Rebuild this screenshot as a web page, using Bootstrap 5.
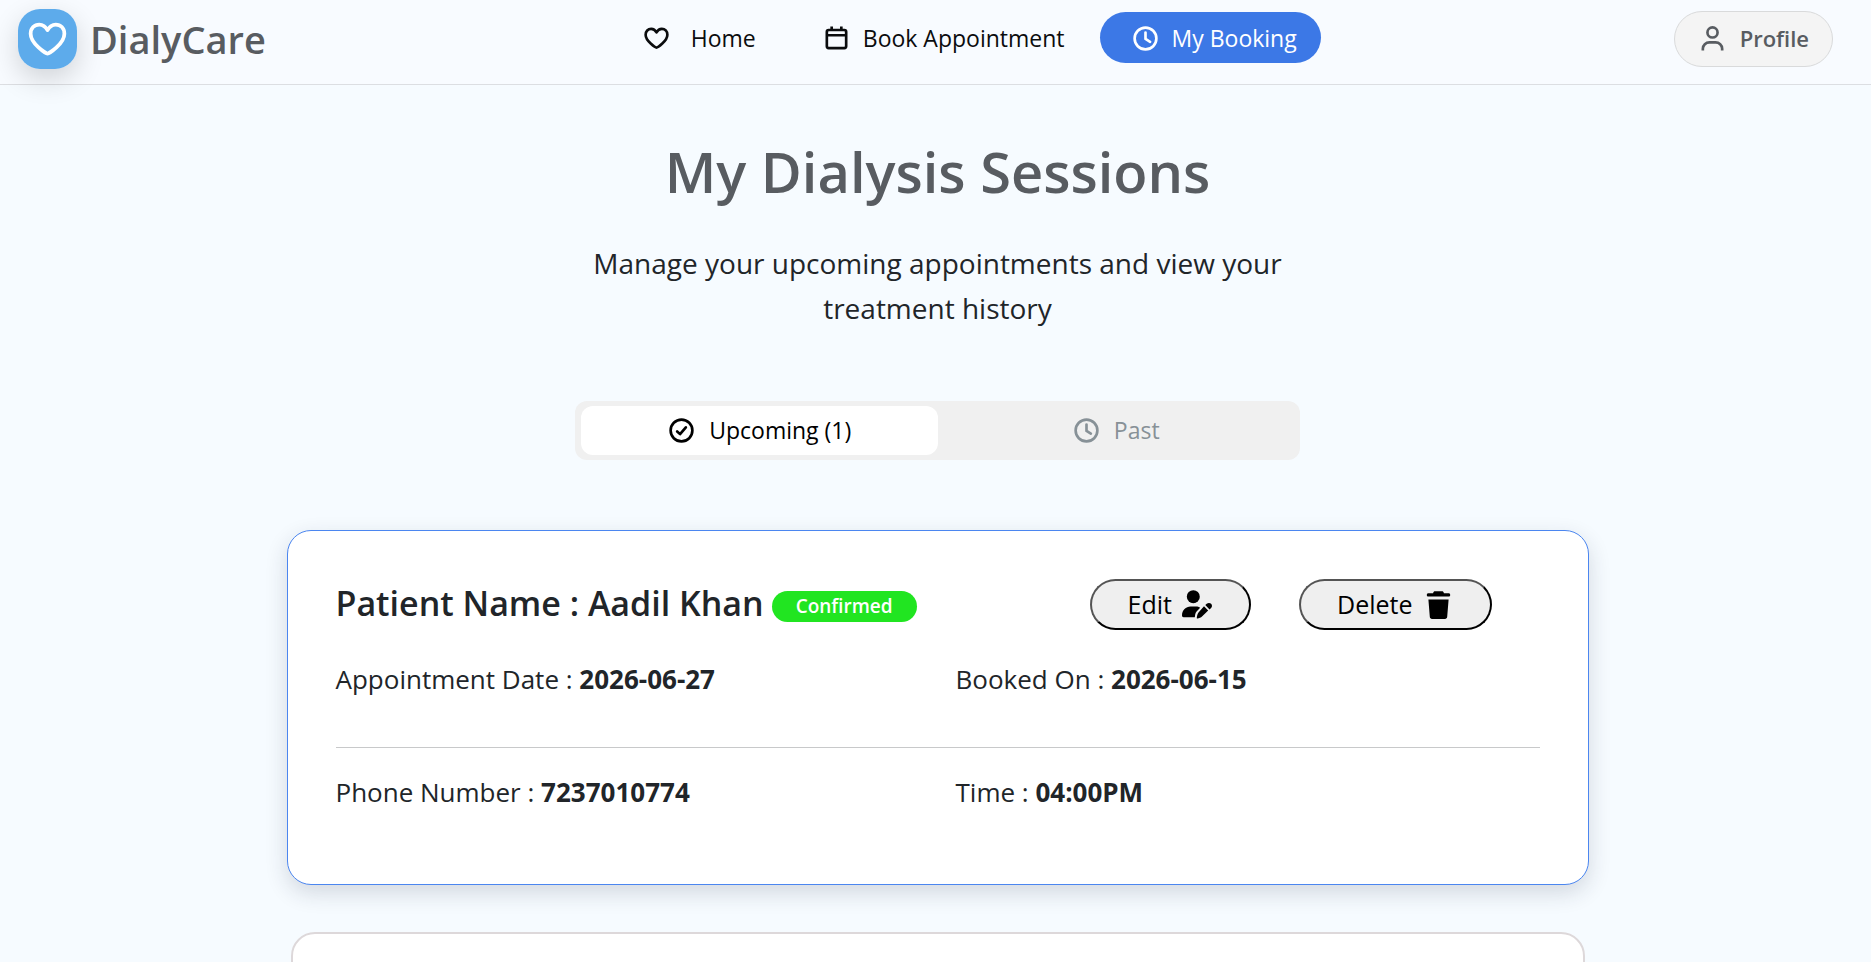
<!DOCTYPE html>
<html lang="en">
<head>
<meta charset="utf-8">
<meta name="viewport" content="width=device-width, initial-scale=1">
<title>DialyCare - My Booking</title>
<link href="https://cdn.jsdelivr.net/npm/bootstrap@5.3.0/dist/css/bootstrap.min.css" rel="stylesheet">
<style>
  body { font-family: "Open Sans", "Noto Sans", sans-serif; background: #f6fbff; color: #212529; }
  .site-header { background: #f8fbff; border-bottom: 1px solid #dcdee2; height: 85px; padding: 0 38px 0 18px; }
  .brand-link { gap: 13px; padding-bottom: 6px; }
  .logo-tile { width: 59px; height: 60px; border-radius: 22px; background: linear-gradient(135deg, #5dabeb 88%, #74b6ee); box-shadow: 0 10px 28px rgba(0, 0, 0, .16); }
  .brand-name { font-size: 38px; line-height: 60px; font-weight: 600; color: #585c61; }
  .site-nav { gap: 11px; font-size: 23px; line-height: 35px; padding-bottom: 10px; }
  .nav-item-link { color: #0b0c0e; padding: 9px 24px 7px 31px; border-radius: 26px; gap: 12px; text-decoration: none; white-space: nowrap; }
  .nav-item-link.home-link { gap: 20px; }
  .nav-item-link.active { background: #3c78e6; color: #fff; }
  .icon { width: 29px; height: 29px; flex: none; fill: none; stroke: currentColor; stroke-width: 2.2; stroke-linecap: round; stroke-linejoin: round; }
  .icon.flat-ends { stroke-linecap: butt; }
  .profile-btn { background: #f4f4f4; border: 1px solid #d9dadb; border-radius: 28px; height: 56px; padding: 0 23px 2px; margin-bottom: 6px; gap: 13px; font-size: 22px; font-weight: 600; color: #585c61; }
  .page-title { font-size: 56px; line-height: 72px; font-weight: 600; color: #585c61; margin: 50px 0 34px; }
  .page-intro { font-size: 28px; line-height: 45px; max-width: 720px; margin-bottom: 70px; }
  .tab-strip { width: 725px; max-width: 100%; background: #f0f0f0; border-radius: 12px; padding: 5px 6px; margin-bottom: 70px; }
  .tab-btn { flex: 1; height: 49px; border: 0; border-radius: 12px; background: transparent; color: #879197; font-size: 23px; gap: 13px; }
  .tab-btn.active { background: #fff; color: #000; }
  .session-list { width: 70%; max-width: 1302px; gap: 47px; }
  .session-card { background: #fff; border: 1px solid #4b86f0; border-radius: 24px; padding: 48px; min-height: 355px; box-shadow: 0 8px 22px rgba(30, 35, 60, .16); }
  .session-card.plain { border: 2px solid #ddd8da; margin: 0 4px; box-shadow: none; }
  .patient-name { font-size: 34px; line-height: 48px; font-weight: 600; }
  .status-pill { background: #21e521; color: #fff; font-size: 19px; line-height: 31px; font-weight: 600; border-radius: 16px; padding: 0 24px; margin-top: 12px; }
  .session-actions { gap: 48px; margin-right: 48px; }
  .action-btn { background: #efefef; border: 2px outset #000; border-radius: 26px; height: 51px; padding: 0 36px; font-size: 25px; color: #000; gap: 10px; }
  .detail-row { --bs-gutter-x: 36px; font-size: 26px; line-height: 40px; }
  .session-head { margin-bottom: 29px; }
  .card-rule { border: 0; border-top: 1px solid #c8c9ca; opacity: 1; margin: 48px 0 24px; }
</style>
</head>
<body>
<header class="site-header d-flex align-items-center justify-content-between">
  <a href="#" class="brand-link d-flex align-items-center text-decoration-none">
    <span class="logo-tile d-flex align-items-center justify-content-center">
      <svg width="45" height="45" viewBox="0 0 24 24" fill="none" stroke="#fff" stroke-width="2" stroke-linejoin="round" aria-hidden="true"><path d="M12 19.5C11.2 19.5 3 14.2 3 8.9 3 6 5 4 7.6 4 9.8 4 11.1 5.3 12 7 12.9 5.3 14.2 4 16.4 4 19 4 21 6 21 8.9 21 14.2 12.8 19.5 12 19.5Z"/></svg>
    </span>
    <span class="brand-name">DialyCare</span>
  </a>
  <nav class="site-nav d-flex align-items-center me-2" aria-label="Main">
    <a href="#" class="nav-item-link home-link d-flex align-items-center">
      <svg class="icon" viewBox="0 0 24 24" aria-hidden="true"><path d="M12 19.5C11.2 19.5 3 14.2 3 8.9 3 6 5 4 7.6 4 9.8 4 11.1 5.3 12 7 12.9 5.3 14.2 4 16.4 4 19 4 21 6 21 8.9 21 14.2 12.8 19.5 12 19.5Z"/></svg>
      Home</a>
    <a href="#" class="nav-item-link d-flex align-items-center">
      <svg class="icon flat-ends" viewBox="0 0 24 24" aria-hidden="true"><rect x="4" y="5" width="16" height="15" rx="1.5"/><path d="M4 9.3H20M8 2V5M16 2V5"/></svg>
      Book Appointment</a>
    <a href="#" class="nav-item-link active d-flex align-items-center" aria-current="page">
      <svg class="icon" viewBox="0 0 24 24" aria-hidden="true"><circle cx="12" cy="12" r="9"/><path d="M12 7V12.4L15.8 14.7"/></svg>
      My Booking</a>
  </nav>
  <button type="button" class="profile-btn d-flex align-items-center">
    <svg class="icon flat-ends" viewBox="0 0 24 24" aria-hidden="true"><circle cx="12" cy="7" r="4.2"/><path d="M4 22V20.5C4 17.5 6.5 15.2 9.5 15.2H14.5C17.5 15.2 20 17.5 20 20.5V22"/></svg>
    Profile</button>
</header>

<main class="d-flex flex-column align-items-center ps-1 pb-5">
  <h1 class="page-title text-center">My Dialysis Sessions</h1>
  <p class="page-intro text-center">Manage your upcoming appointments and view your treatment history</p>

  <div class="tab-strip d-flex" role="tablist">
    <button type="button" role="tab" aria-selected="true" class="tab-btn active d-flex align-items-center justify-content-center">
      <svg class="icon" viewBox="0 0 24 24" aria-hidden="true"><circle cx="12" cy="12" r="9"/><path d="M8.4 12.8L10.8 15L15.6 9.4"/></svg>
      Upcoming (1)</button>
    <button type="button" role="tab" aria-selected="false" class="tab-btn d-flex align-items-center justify-content-center">
      <svg class="icon" viewBox="0 0 24 24" aria-hidden="true"><circle cx="12" cy="12" r="9"/><path d="M12 7V12.4L15.6 14.6"/></svg>
      Past</button>
  </div>

  <section class="session-list d-flex flex-column" aria-label="Upcoming sessions">
    <article class="session-card">
      <div class="session-head d-flex align-items-start justify-content-between">
        <div class="d-flex align-items-start gap-2">
          <h2 class="patient-name mb-0">Patient Name : Aadil Khan</h2>
          <span class="status-pill">Confirmed</span>
        </div>
        <div class="session-actions d-flex">
          <button type="button" class="action-btn d-flex align-items-center">Edit
            <svg width="31" height="29" viewBox="0 0 31 29" aria-hidden="true"><circle cx="11.3" cy="6.7" r="6.5"/><path d="M0 25.6C0 20 4 16.5 8.5 16.5H14c1.6 0 3 .5 4.2 1.3L14.8 21.2c-.9.9-1.4 2-1.6 3.2L12.8 27.2H1.6C.7 27.2 0 26.5 0 25.6Z"/><path d="M22 16.2L26.2 20.4 20 26.6C19.2 27.4 16.8 28.5 15.6 28.5 14.8 28.5 14.7 28.1 14.8 27.4 15 26 15.6 23.4 16.5 22.4L22 16.2ZM23.3 15 24.7 13.8C26 12.6 27.9 12.6 29.1 13.7 30.3 14.9 30.3 16.8 29.1 18L27.5 19.4Z"/></svg>
          </button>
          <button type="button" class="action-btn d-flex align-items-center">Delete
            <svg width="31" height="28" viewBox="0 0 31 28" aria-hidden="true"><path d="M12 .2H19C20 .2 20.6.8 20.9 2.2H25.5C26.6 2.2 27.2 2.8 27.2 3.9 27.2 5 26.6 5.6 25.5 5.6H5.5C4.4 5.6 3.8 5 3.8 3.9 3.8 2.8 4.4 2.2 5.5 2.2H10.1C10.4.8 11 .2 12 .2ZM5.4 8.4H25.6L24.2 25.8C24.1 27.1 23.2 28 22 28H9C7.8 28 6.9 27.1 6.8 25.8Z"/></svg>
          </button>
        </div>
      </div>
      <div class="detail-row row">
        <div class="col-6">Appointment Date : <strong>2026-06-27</strong></div>
        <div class="col-6">Booked On : <strong>2026-06-15</strong></div>
      </div>
      <hr class="card-rule">
      <div class="detail-row row">
        <div class="col-6">Phone Number : <strong>7237010774</strong></div>
        <div class="col-6">Time : <strong>04:00PM</strong></div>
      </div>
    </article>
    <article class="session-card plain"></article>
  </section>
</main>
<script src="https://cdn.jsdelivr.net/npm/bootstrap@5.3.0/dist/js/bootstrap.bundle.min.js"></script>
</body>
</html>
